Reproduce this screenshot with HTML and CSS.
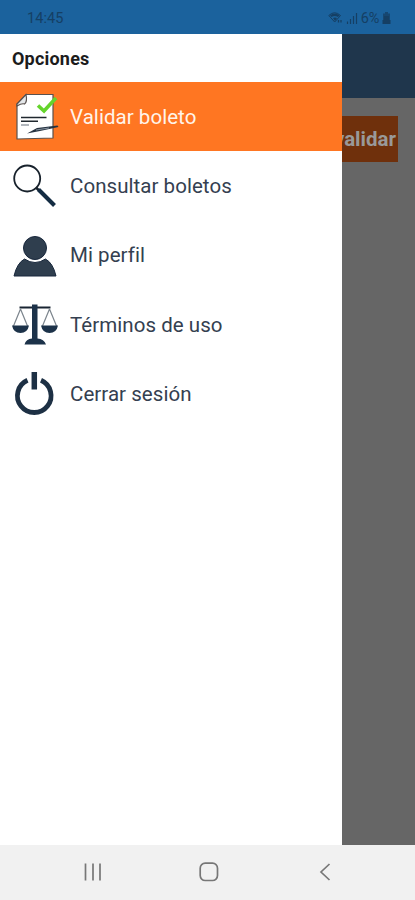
FILE: index.html
```html
<!DOCTYPE html>
<html lang="es">
<head>
<meta charset="utf-8">
<title>Opciones</title>
<link rel="stylesheet" href="styles.css">
</head>
<body>
<div class="phone">
  <header class="status">
    <span class="clock">14:45</span>
    <div class="indicators">
      <svg class="wifi" width="16" height="14" viewBox="0 0 16 14"><path d="M.8 4.500Q6.500 -1 12.500 4.500L6.700 11Z" fill="none" stroke="currentColor" stroke-width="1"/><path d="M2 4.300Q6.700 .500 11.500 4.300L10 6Q6.700 4 3.500 6ZM5 7Q7 6 9 7L7 10Z" fill="currentColor"/><path d="M10.500 9v2.500M13 9v2.500" stroke="currentColor" stroke-width="1.300"/></svg>
      <svg class="signal" width="12" height="12" viewBox="0 0 12 12"><path d="M1.500 9.500v2.500M4.500 7v5M7.500 4v8M10.500 1v11" stroke="currentColor" stroke-width="1.200"/></svg>
      <span class="percent">6%</span>
      <svg class="battery" width="9" height="12" viewBox="0 0 9 12"><path d="M3 0h3v1.500h2V9H1V1.500h2z" fill="currentColor" opacity=".75"/><path d="M2 4h5v4h1.500v4H.5V8H2z" fill="currentColor"/></svg>
    </div>
  </header>
  <main class="content">
    <nav class="drawer">
      <h1 class="title">Opciones</h1>
      <a class="item active">
        <svg class="icon" width="50" height="50" viewBox="0 0 50 50"><path d="M16 2.500H43V46L7 47V12Z" fill="#fff" stroke="#59514e" stroke-width="1.200"/><path d="M16 2.500Q17.500 10 14.500 12Q12 11 7 14V12Z" fill="#e4e7e9" stroke="#59514e" stroke-width="1.200"/><path d="M11 25.500H36.500M11 29.200H28" stroke="#20282f" stroke-width="1.500"/><path d="M11 33H19" stroke="#89909a" stroke-width="1.300"/><path d="M17 41.500L27 36L47.500 33.500L48.500 35L30 39Z" fill="#263341"/><path d="M26 38L39 36" stroke="#8793a0" stroke-width="1"/><path d="M28 13.500L34 19L46 6" fill="none" stroke="#65d42c" stroke-width="3.600"/></svg>
        <span>Validar boleto</span>
      </a>
      <a class="item consult">
        <svg class="icon" width="50" height="50" viewBox="0 0 50 50"><circle cx="17.200" cy="17.500" r="13" fill="none" stroke="#18222c" stroke-width="1.800"/><path d="M26 26.500L30 30.500" stroke="#18222c" stroke-width="2.500"/><path d="M28.500 28.500L44.500 44.500" stroke="#142c43" stroke-width="4"/></svg>
        <span>Consultar boletos</span>
      </a>
      <a class="item profile">
        <svg class="icon" width="50" height="50" viewBox="0 0 50 50"><circle cx="25" cy="18" r="11.500" fill="#2f3e4e" stroke="#18273c" stroke-width="1"/><path d="M14.500 29Q25 36 35.500 29Q43 33 46 46H4Q7 33 14.500 29Z" fill="#2f3e4e" stroke="#18273c" stroke-width="1"/></svg>
        <span>Mi perfil</span>
      </a>
      <a class="item terms">
        <svg class="icon" width="50" height="50" viewBox="0 0 50 50"><path d="M9.500 7.500H40.500" stroke="#192432" stroke-width="2"/><path d="M22 4.500H27.500V38.500Q34 39 36 44.500H14.500Q16 39 22 38.500Z" fill="#1c3249"/><path d="M10.500 9L3.500 26M10.500 9L17.500 26M39.500 9L32.500 26M39.500 9L46.500 26" fill="none" stroke="#7c858d" stroke-width="1.200"/><path d="M2 25.500H19Q17.500 33 10.500 33Q3.500 33 2 25.500ZM31 25.500H48Q46.500 33 39.500 33Q32.500 33 31 25.500Z" fill="#1c3249"/></svg>
        <span>Términos de uso</span>
      </a>
      <a class="item logout">
        <svg class="icon" width="50" height="50" viewBox="0 0 50 50"><path d="M17.500 11.300A16.800 16.800 0 1 0 31 11.300" fill="none" stroke="#1d3044" stroke-width="4.800"/><path d="M24.300 3V20.500" stroke="#1d3044" stroke-width="5.500"/></svg>
        <span>Cerrar sesión</span>
      </a>
    </nav>
    <section class="behind">
      <div class="toolbar"></div>
      <div class="action"><span>validar</span></div>
    </section>
  </main>
  <footer class="navbar">
    <svg width="18" height="18" viewBox="0 0 18 18"><path d="M1.500 0.500V17.500M9 0.500V17.500M16 0.500V17.500" stroke="#777" stroke-width="1.700"/></svg>
    <svg width="20" height="20" viewBox="0 0 20 20"><rect x="1.200" y="1.200" width="17.300" height="17.300" rx="5" fill="none" stroke="#777" stroke-width="1.700"/></svg>
    <svg width="12" height="18" viewBox="0 0 12 18"><path d="M10.500 1L2 9L10.500 17" fill="none" stroke="#777" stroke-width="1.700"/></svg>
  </footer>
</div>
</body>
</html>
```
FILE: styles.css
```css
* { box-sizing: border-box; }
body { margin: 0; font-family: Roboto, "Liberation Sans", sans-serif; }
.phone { width: 415px; height: 900px; display: grid; grid-template-rows: 33.500px 811.500px 55px; overflow: hidden; }
.status { background: #1b629d; color: #153f64; display: flex; justify-content: space-between; align-items: center; padding: 3px 24px 0 27px; font-size: 14.500px; }
.clock { letter-spacing: .1px; }
.indicators { display: flex; align-items: center; gap: 2.500px; }
.percent { letter-spacing: 0; }
.content { display: grid; grid-template-columns: 341.500px 1fr; }
.drawer { background: #fff; }
.title { height: 48.500px; margin: 0; padding: 0 12px; line-height: 49px; font-size: 18px; font-weight: 700; color: #1c1c1c; letter-spacing: .2px; }
.item { height: 69.300px; padding-left: 10px; display: flex; align-items: center; gap: 10px; color: #344050; font-size: 20.500px; letter-spacing: .05px; white-space: nowrap; }
.icon { flex: none; }
.active { background: #ff7622; color: #fff4ea; }
.behind { background: #666; overflow: hidden; }
.toolbar { height: 64px; background: #1f364c; }
.action { width: 56.500px; height: 46px; margin-top: 18px; padding-right: 2px; background: #6f300c; color: #999; display: flex; justify-content: flex-end; align-items: center; overflow: hidden; font-size: 20.500px; font-weight: 700; }
.navbar { background: #f1f1f1; display: flex; align-items: center; justify-content: space-between; padding: 0 84px 2px; }
.navbar svg:nth-child(2) { margin-right: 3px; }
```
